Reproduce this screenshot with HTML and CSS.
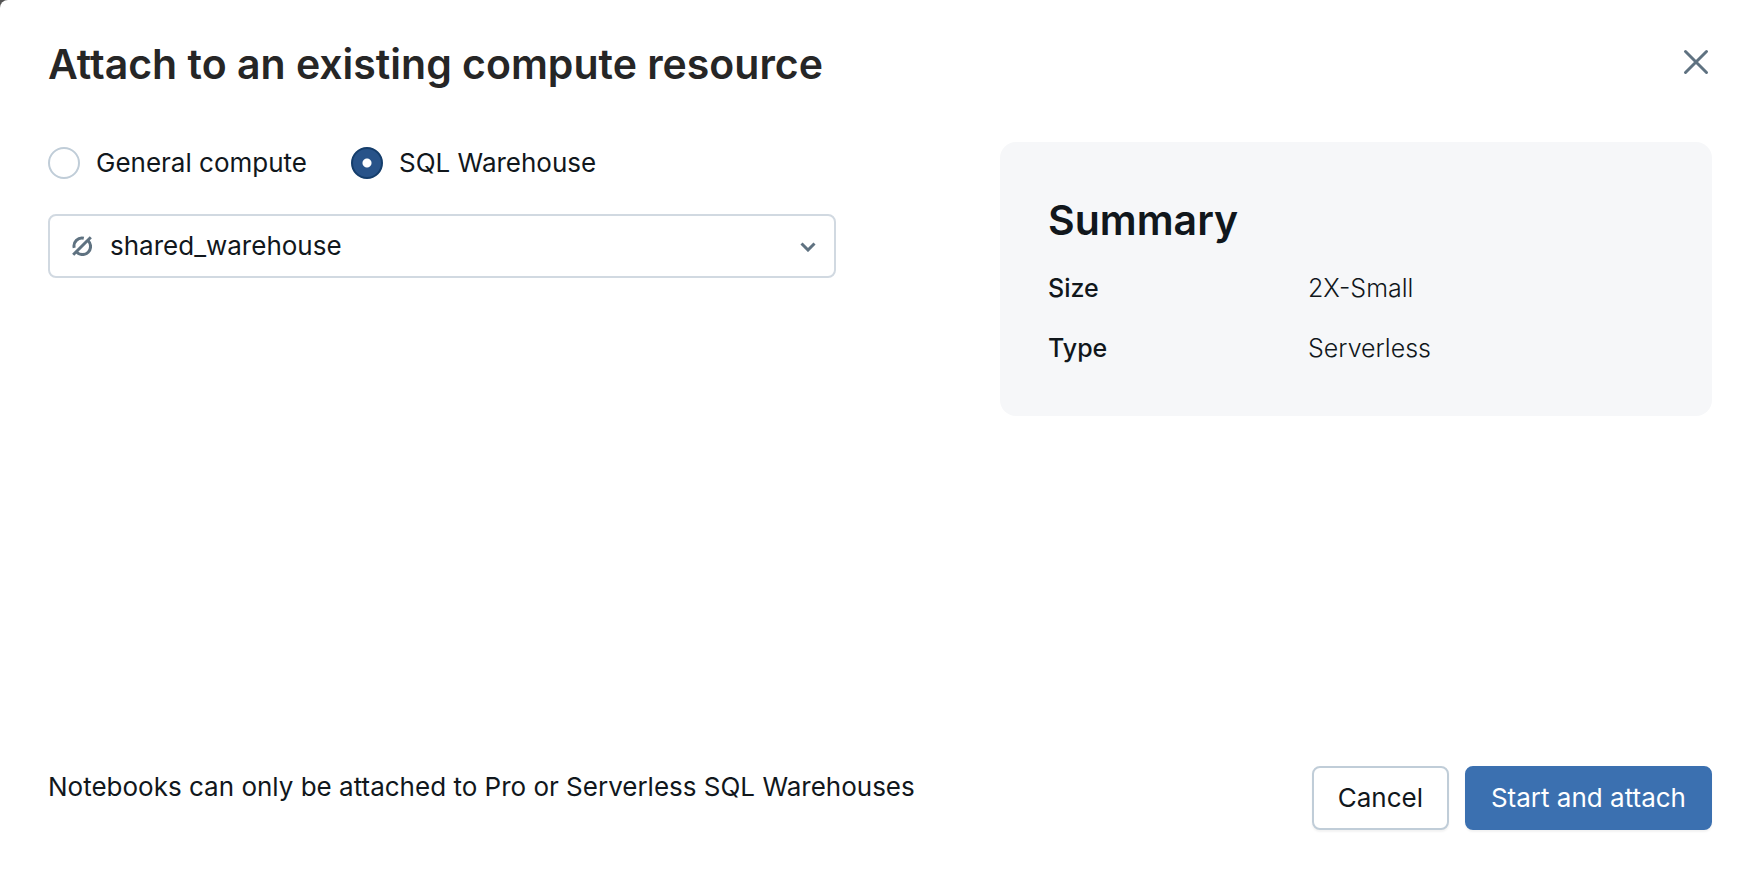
FILE: index.html
```
<!DOCTYPE html>
<html lang="en">
<head>
<meta charset="utf-8">
<meta name="viewport" content="width=device-width, initial-scale=1">
<title>Attach to an existing compute resource</title>
<link rel="stylesheet" href="styles.css">
</head>
<body>
<form class="dialog" role="dialog" aria-labelledby="dialog-title">
  <header class="dialog-header">
    <h1 class="dialog-title" id="dialog-title">Attach to an existing compute resource</h1>
    <button class="close-button" type="button" aria-label="Close">
      <svg class="close-icon" viewBox="0 0 32 32" aria-hidden="true"><path d="M5.500 5.500L26.500 26.500M26.500 5.500L5.500 26.500"/></svg>
    </button>
  </header>
  <main class="dialog-body">
    <div class="resource">
      <div class="radio-group" role="radiogroup" aria-label="Compute type">
        <label class="radio-option"><input class="radio" type="radio" name="compute" value="general">General compute</label>
        <label class="radio-option"><input class="radio" type="radio" name="compute" value="sql" checked>SQL Warehouse</label>
      </div>
      <div class="select-field">
        <svg class="select-status" viewBox="0 0 20 20" aria-hidden="true"><path d="M1.200 18.800L18.800 1.200"/><path d="M2.200 11.800A8 8 0 0 1 11.800 2.200M16.200 4.800A8 8 0 0 1 4.800 16.200"/></svg>
        <select class="select" aria-label="SQL warehouse">
          <option>shared_warehouse</option>
        </select>
        <svg class="select-chevron" viewBox="0 0 16 10" aria-hidden="true"><path d="M1.500 1.500L8 8L14.500 1.500"/></svg>
      </div>
    </div>
    <section class="summary">
      <h2 class="summary-title">Summary</h2>
      <dl class="summary-list">
        <dt class="summary-term">Size</dt>
        <dd class="summary-value">2X-Small</dd>
        <dt class="summary-term">Type</dt>
        <dd class="summary-value">Serverless</dd>
      </dl>
    </section>
  </main>
  <footer class="dialog-footer">
    <p class="footer-note">Notebooks can only be attached to Pro or Serverless SQL Warehouses</p>
    <div class="footer-actions">
      <button class="button" type="button">Cancel</button>
      <button class="button button-primary" type="submit">Start and attach</button>
    </div>
  </footer>
</form>
</body>
</html>
```

FILE: styles.css
```
* {
  box-sizing: border-box;
}

body {
  margin: 0;
  background: #555;
  color: #11171c;
  font-family: Inter, "Liberation Sans", sans-serif;
  font-size: 26px;
  line-height: 42px;
}

h1, h2, p, dl, dd {
  margin: 0;
}

.dialog {
  display: flex;
  flex-direction: column;
  min-height: 100vh;
  padding: 32px 44px 44px 48px;
  border-top-left-radius: 8px;
  background: #fff;
}

.dialog-header {
  display: flex;
  align-items: center;
  justify-content: space-between;
  height: 64px;
}

.dialog-title {
  color: #262626;
  font-size: 41px;
  font-weight: 600;
  line-height: 64px;
}

.close-button {
  display: flex;
  padding: 0 0 4px;
  border: 0;
  background: none;
}

.close-icon {
  width: 32px;
  height: 32px;
  fill: none;
  stroke: #5f7281;
  stroke-width: 3;
  stroke-linecap: round;
}

.dialog-body {
  display: grid;
  flex: 1;
  grid-template-columns: 788fr 712fr;
  column-gap: 164px;
  align-items: start;
  padding-top: 46px;
}

.radio-group {
  display: flex;
  gap: 44px;
}

.radio-option {
  display: flex;
  align-items: center;
  gap: 16px;
}

.radio {
  width: 32px;
  height: 32px;
  margin: 0;
  border: 2px solid #c0cdd8;
  border-radius: 50%;
  appearance: none;
  background: #fff;
}

.radio:checked {
  border-color: #143d6b;
  background: radial-gradient(circle, #fff 4px, #285389 5px);
}

.select-field {
  position: relative;
  margin-top: 30px;
}

.select {
  width: 100%;
  height: 64px;
  padding: 0 60px;
  border: 2px solid #d1d9e1;
  border-radius: 8px;
  appearance: none;
  background: #fff;
  color: inherit;
  font: inherit;
}

.select-status,
.select-chevron {
  position: absolute;
  fill: none;
  stroke: #5f7281;
  stroke-width: 3;
  pointer-events: none;
}

.select-status {
  top: 22px;
  left: 24px;
  width: 20px;
  height: 20px;
}

.select-chevron {
  top: 28px;
  right: 20px;
  width: 16px;
  height: 10px;
}

.summary {
  padding: 48px;
  border-radius: 16px;
  background: #f6f7f9;
}

.summary-title {
  font-size: 41px;
  font-weight: 600;
  line-height: 60px;
}

.summary-list {
  display: grid;
  grid-template-columns: 260px 1fr;
  row-gap: 20px;
  padding-top: 18px;
  font-size: 25px;
  line-height: 40px;
}

.summary-term {
  font-weight: 500;
}

.summary-value {
  font-weight: 300;
}

.dialog-footer {
  display: flex;
  align-items: flex-start;
  justify-content: space-between;
}

.footer-actions {
  display: flex;
  gap: 16px;
}

.button {
  height: 64px;
  padding: 0 24px;
  border: 2px solid #c0cdd8;
  border-radius: 8px;
  background: #fff;
  box-shadow: 0 2px 2px rgba(0, 0, 0, 0.05);
  color: inherit;
  font: inherit;
}

.button-primary {
  border-color: #3b70b0;
  background: #3b70b0;
  color: #fff;
}
```
